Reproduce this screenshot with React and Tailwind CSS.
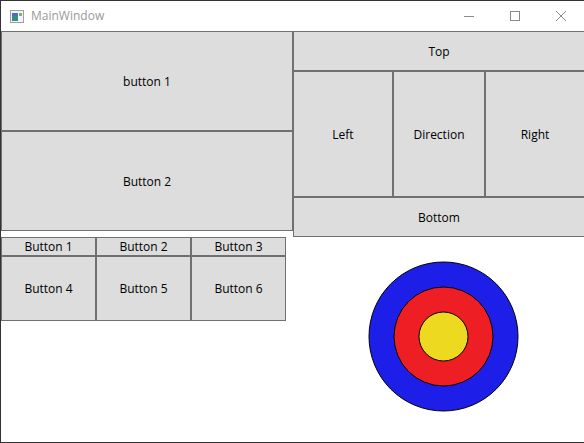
function Btn({ children, className = "" }) {
  return (
    <div
      className={`flex items-center justify-center border border-[#707070] bg-[#dddddd] pt-px text-[12px] text-black ${className}`}
    >
      {children}
    </div>
  );
}

function TitleBar() {
  return (
    <div className="flex h-[30px] items-center bg-white">
      <svg width="16" height="16" viewBox="0 0 16 16" className="ml-[8px] mt-[1px]">
        <rect x="1.5" y="1.5" width="13" height="12" fill="#f4f4f4" stroke="#a0a0a0" />
        <rect x="3" y="4" width="6" height="8" fill="#3a8a8a" />
        <rect x="3" y="4" width="6" height="3" fill="#4a6fc0" />
        <rect x="10" y="4" width="3" height="3" fill="#7fb07a" />
      </svg>
      <span className="ml-[6px] text-[12px] text-[#9a9a9a]">MainWindow</span>
      <div className="ml-auto flex h-full items-center">
        <div className="flex h-full w-[46px] items-center justify-center">
          <svg width="10" height="10" viewBox="0 0 10 10">
            <line x1="0" y1="5.5" x2="10" y2="5.5" stroke="#8a8a8a" />
          </svg>
        </div>
        <div className="flex h-full w-[46px] items-center justify-center">
          <svg width="10" height="10" viewBox="0 0 10 10">
            <rect x="0.5" y="0.5" width="9" height="9" fill="none" stroke="#8a8a8a" />
          </svg>
        </div>
        <div className="flex h-full w-[46px] items-center justify-center">
          <svg width="10" height="10" viewBox="0 0 10 10">
            <path d="M0 0 L10 10 M10 0 L0 10" stroke="#8a8a8a" />
          </svg>
        </div>
      </div>
    </div>
  );
}

export default function App() {
  return (
    <div
      className="flex h-[443px] w-[584px] flex-col overflow-hidden border-b border-l border-t border-[#333333] bg-white"
      style={{ fontFamily: '"Open Sans", "Noto Sans", sans-serif' }}
    >
      <TitleBar />
      <div className="grid w-[600px] flex-1 grid-cols-[292px_300px] grid-rows-[206px_1fr]">
        <div className="flex flex-col">
          <Btn className="h-[100px]">button 1</Btn>
          <Btn className="h-[100px]">Button 2</Btn>
        </div>
        <div className="flex flex-col">
          <Btn className="h-[40px] pr-[8px]">Top</Btn>
          <div className="flex flex-1">
            <Btn className="w-[100px]">Left</Btn>
            <Btn className="w-[92px]">Direction</Btn>
            <Btn className="flex-1 pr-[8px]">Right</Btn>
          </div>
          <Btn className="h-[40px] pr-[8px]">Bottom</Btn>
        </div>
        <div>
          <div className="grid w-[285px] grid-cols-3 grid-rows-[19px_65px]">
            <Btn>Button 1</Btn>
            <Btn>Button 2</Btn>
            <Btn>Button 3</Btn>
            <Btn>Button 4</Btn>
            <Btn>Button 5</Btn>
            <Btn>Button 6</Btn>
          </div>
        </div>
        <div className="pl-[75px] pt-[24px]">
          <svg width="151" height="151" viewBox="0 0 151 151">
            <circle cx="75.5" cy="75.5" r="74.5" fill="#1e1ee9" stroke="#000" />
            <circle cx="75.5" cy="75.5" r="49.5" fill="#ed1f24" stroke="#000" />
            <circle cx="75.5" cy="75.5" r="24.5" fill="#ecd920" stroke="#000" />
          </svg>
        </div>
      </div>
    </div>
  );
}
